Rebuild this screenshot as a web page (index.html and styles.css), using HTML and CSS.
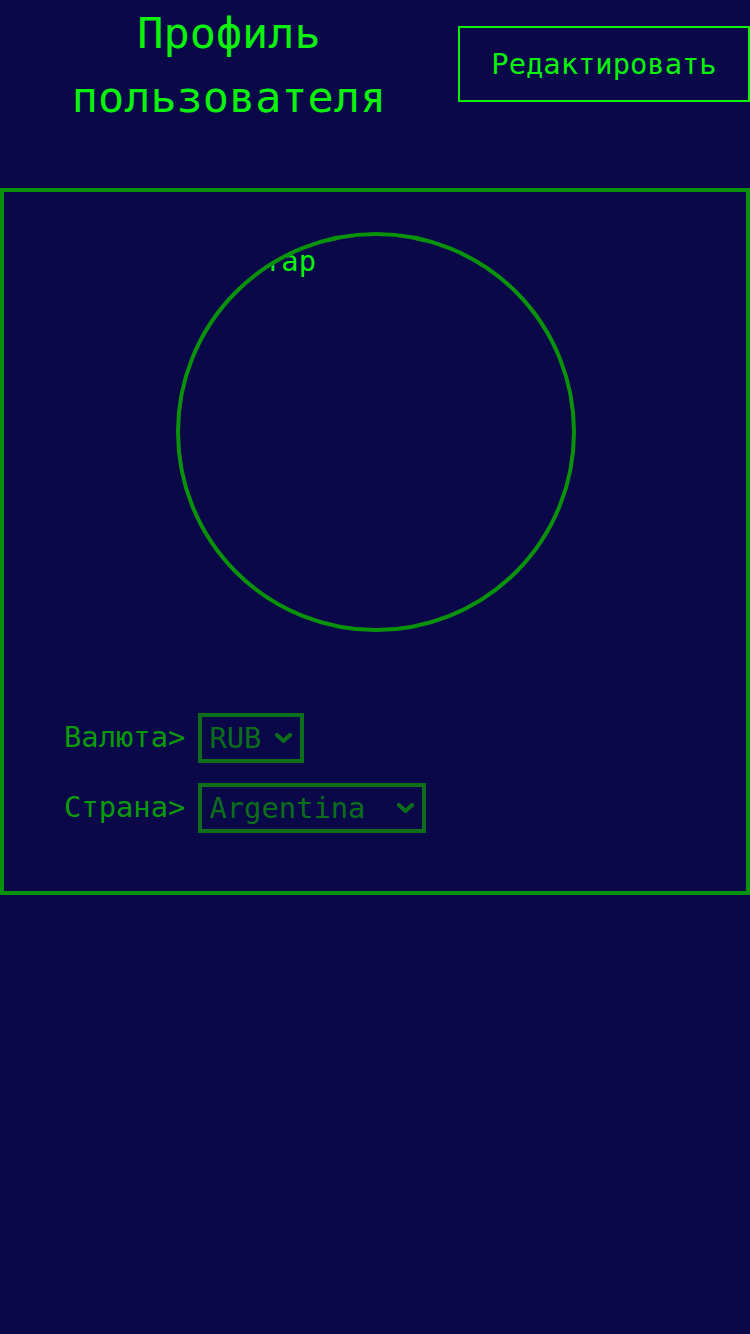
FILE: index.html
```html
<!DOCTYPE html>
<html lang="ru">
<head>
<meta charset="utf-8">
<title>Профиль пользователя</title>
<link rel="stylesheet" href="styles.css">
</head>
<body>
<header class="top">
  <h1 class="title">Профиль пользователя</h1>
  <button class="edit" type="button">Редактировать</button>
</header>
<main class="card">
  <div class="avatar"><span class="avatar-alt">Аватар</span></div>
  <div class="settings">
    <div class="row">
      <label class="label" for="cur">Валюта&gt;</label>
      <div class="pick pick-cur">
        <select id="cur" class="select">
          <option>RUB</option>
          <option>USD</option>
          <option>EUR</option>
        </select>
        <svg class="chev" width="17" height="10" viewBox="0 0 17 10"><path d="M2 2 L8.5 8 L15 2" fill="none" stroke="currentColor" stroke-width="4" stroke-linecap="square"/></svg>
      </div>
    </div>
    <div class="row">
      <label class="label" for="country">Страна&gt;</label>
      <div class="pick pick-country">
        <select id="country" class="select">
          <option>Argentina</option>
          <option>Russia</option>
          <option>Kazakhstan</option>
        </select>
        <svg class="chev" width="17" height="10" viewBox="0 0 17 10"><path d="M2 2 L8.5 8 L15 2" fill="none" stroke="currentColor" stroke-width="4" stroke-linecap="square"/></svg>
      </div>
    </div>
  </div>
</main>
</body>
</html>
```
FILE: styles.css
```css
* { box-sizing: border-box; }
html, body {
  margin: 0;
  padding: 0;
  background: #0a0848;
  min-height: 100%;
}
body {
  font-family: "DejaVu Sans Mono", monospace;
  color: #0cf20c;
  width: 750px;
  height: 1334px;
}
.top {
  display: flex;
  align-items: center;
  height: 128px;
  margin-bottom: 60px;
}
.title {
  flex: 1;
  margin: 0;
  padding-top: 3px;
  text-align: center;
  font-weight: normal;
  font-size: 43.5px;
  line-height: 63.5px;
  color: #0cf20c;
}
.edit {
  width: 292px;
  height: 76px;
  padding: 0;
  background: transparent;
  border: 2px solid #0cf20c;
  color: #0cf20c;
  font-family: "DejaVu Sans Mono", monospace;
  font-size: 28.8px;
}
.card {
  border: 4px solid #07900a;
  height: 707px;
  padding-top: 40px;
}
.avatar {
  width: 400px;
  height: 400px;
  margin: 0 auto;
  border: 4px solid #0a920a;
  border-radius: 50%;
  overflow: hidden;
  padding: 9px 0 0 32px;
  transform: translateX(1px);
}
.avatar-alt {
  display: block;
  font-size: 28.8px;
  line-height: 33px;
  color: #0cf20c;
  white-space: nowrap;
}
.settings {
  display: flex;
  flex-direction: column;
  gap: 20px;
  margin-top: 81px;
  padding-left: 60px;
}
.row {
  display: flex;
  align-items: center;
  gap: 13px;
  height: 50px;
}
.label {
  font-size: 28.8px;
  color: #0a9a0a;
  line-height: 33px;
  margin-top: -2px;
}
.pick {
  display: flex;
  align-items: center;
  height: 50px;
  border: 4px solid #0b6e18;
  color: #0b6e18;
  padding: 0 8px 0 7px;
}
.pick-cur { width: 106px; }
.pick-country { width: 228px; }
.select {
  flex: 1;
  min-width: 0;
  -webkit-appearance: none;
  appearance: none;
  background: transparent;
  border: none;
  outline: none;
  padding: 0;
  margin: 0;
  font-family: "DejaVu Sans Mono", monospace;
  font-size: 28.8px;
  color: #0b6e18;
}
.chev {
  flex: none;
  display: block;
  margin-top: -1px;
}
```
